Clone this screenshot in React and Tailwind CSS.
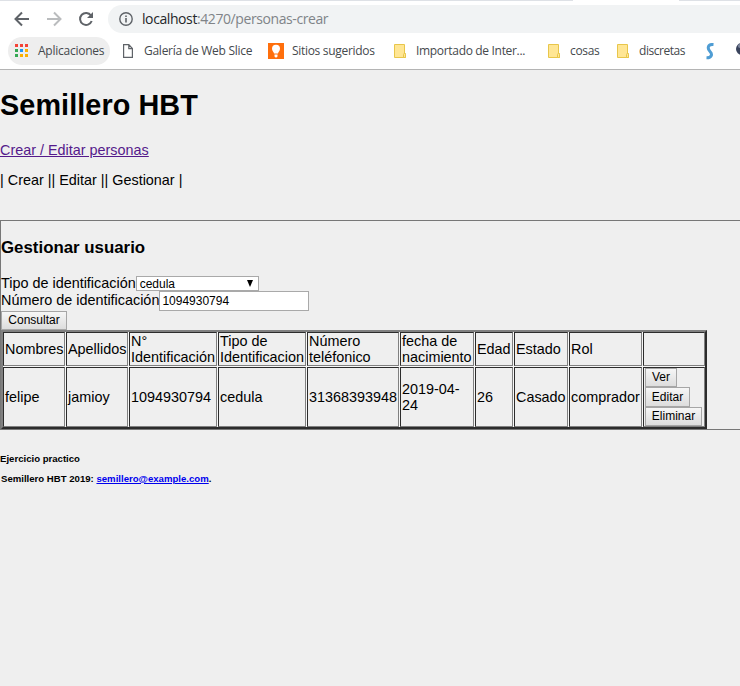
import React from 'react';

const headers = ['Nombres', 'Apellidos', 'N°\nIdentificación', 'Tipo de\nIdentificacion', 'Número\nteléfonico', 'fecha de\nnacimiento', 'Edad', 'Estado', 'Rol', ''];
const person = ['felipe', 'jamioy', '1094930794', 'cedula', '31368393948', '2019-04-\n24', '26', 'Casado', 'comprador'];

function Cell({ children }) {
  return <div className="flex flex-col justify-center border border-t-[#2c2c2c] border-r-[#808080] border-b-[#808080] border-l-[#2c2c2c] bg-[#efefef] px-px whitespace-pre">{children}</div>;
}

function Button({ children, className }) {
  return <button className={`block border border-[#a6a6a6] bg-linear-to-b from-[#f6f6f6] to-[#dddddd] text-center text-[12px] leading-[15px] ${className}`}>{children}</button>;
}

function Folder() {
  return (
    <svg width="13" height="14" viewBox="0 0 13 14" className="shrink-0">
      <path d="M.5.5h10v9h1v4H.5z" fill="#ffe694" stroke="#e8c64a" />
      <path d="M9.500 13.500v-3q0-1 1-1t1 1v3z" fill="#ffe694" stroke="#e8c64a" />
    </svg>
  );
}

function Bookmark({ icon, label, className, textClass }) {
  return (
    <div className={`flex h-7 shrink-0 items-center ${className}`}>
      {icon}
      <span className={`whitespace-nowrap ${textClass}`}>{label}</span>
    </div>
  );
}

const dots = ['#f44336', '#f44336', '#f44336', '#34a853', '#2196f3', '#fbb000', '#34a853', '#fbb000', '#fbb000'];

function Browser() {
  return (
    <header className="h-[70px] overflow-hidden border-b border-[#b4b4b4] bg-white font-['Open_Sans',sans-serif]">
      <div className="flex h-px justify-between"><div className="w-[573px] bg-[#dee1e6]" /><div className="w-[61px] bg-[#dee1e6]" /></div>
      <div className="mt-1 flex h-7 items-center">
        <svg width="108" height="28" viewBox="0 0 108 28" fill="none" strokeWidth="2" className="shrink-0">
          <path d="M29 14H16M22 7.500 15.500 14l6.500 6.500" stroke="#5f6368" />
          <path d="M47 14h13M54 7.500 60.500 14 54 20.500" stroke="#babcbe" />
          <path d="M91 10.500A6 6 0 1 0 91.700 16" stroke="#5f6368" />
          <path d="M93 7v6h-6z" fill="#5f6368" />
        </svg>
        <div className="flex h-7 flex-1 items-center rounded-l-full bg-[#f1f3f4]">
          <svg width="14" height="14" viewBox="0 0 14 14" className="ml-[11px]" fill="none" stroke="#5f6368"><circle cx="7" cy="7" r="6.200" strokeWidth="1.400" /><path d="M7 6v4.500M7 3.500v1.500" strokeWidth="1.600" /></svg>
          <span className="ml-[9px] text-[14px] leading-5 tracking-[-0.41px] text-[#808488]"><span className="text-[#24272a]">localhost</span>:4270/personas-crear</span>
        </div>
      </div>
      <div className="mt-1 flex h-7 text-[12px] text-[#45494d]">
        <Bookmark className="ml-2 w-[102px] rounded-full bg-[#eeeeee] pl-[7px]" textClass="ml-[10px] tracking-[-0.25px]" label="Aplicaciones" icon={
          <svg width="13" height="14" viewBox="0 0 13 14">{dots.map((c, i) => <rect key={i} x={(i % 3) * 5} y={Math.floor(i / 3) * 5} width="3" height="3" fill={c} />)}</svg>
        } />
        <Bookmark className="ml-[13px] w-[145px]" textClass="ml-[11px] tracking-[-0.26px]" label="Galería de Web Slice" icon={
          <svg width="10" height="14" viewBox="0 0 10 14" fill="none" stroke="#5f6368" strokeWidth="1.200"><path d="M.6.600h5.200l3.600 4v8.800H.6zM5.800.600v4h3.600" /></svg>
        } />
        <Bookmark className="w-[126px]" textClass="ml-2 tracking-[-0.31px]" label="Sitios sugeridos" icon={
          <svg width="16" height="16" viewBox="0 0 16 16"><rect width="16" height="16" fill="#ff6f0c" /><path d="M6 10.500C6 9 4 8 4 5.700a4 4 0 1 1 8 0C12 8 10 9 10 10.500zM6.500 11.500h3v2l-1 1h-1l-1-1z" fill="#fff" /></svg>
        } />
        <Bookmark className="w-[154px]" textClass="ml-[9px] tracking-[-0.32px]" label="Importado de Inter..." icon={<Folder />} />
        <Bookmark className="w-[69px]" textClass="ml-[9px] tracking-[-0.35px]" label="cosas" icon={<Folder />} />
        <Bookmark className="w-[89px]" textClass="ml-[9px] tracking-[-0.45px]" label="discretas" icon={<Folder />} />
        <svg width="8" height="17" viewBox="0 0 8 17" className="mt-[6px] shrink-0" fill="none" stroke="#4f9dd4" strokeWidth="3"><path d="M7.500 1.500C1 1 1.500 6 4 8.500S6 15 .5 14.800" /></svg>
        <svg width="4" height="14" viewBox="0 0 4 14" className="mt-[5px] ml-[22px] shrink-0"><circle cx="6" cy="7" r="6" fill="#39435c" /><circle cx="4" cy="4" r="2" fill="#818aa0" /></svg>
      </div>
    </header>
  );
}

export default function App() {
  return (
    <div className="h-[686px] w-[740px] overflow-hidden bg-[#efefef] font-['Liberation_Sans',Arial,sans-serif] text-[14.4px] leading-4 text-black">
      <Browser />
      <h1 className="mt-[19px] text-[28.8px] leading-8 font-bold tracking-[0.08px]">Semillero HBT</h1>
      <p className="mt-[21px]"><a className="text-[#551a8b] underline">Crear / Editar personas</a></p>
      <p className="mt-[14px]">| Crear || Editar || Gestionar |</p>
      <main className="mt-8 h-[210px] w-[742px] border border-[#777777]">
        <h2 className="mt-[17px] text-[16.85px] leading-[19px] font-bold">Gestionar usuario</h2>
        <div className="mt-[19px] flex h-[15px] items-start">
          <label className="-mt-px">Tipo de identificación</label>
          <div className="flex h-[15px] w-[123px] items-center justify-between border border-[#a9a9a9] bg-white pr-[4px] pl-[3px] text-[12px] leading-3">
            <span>cedula</span><svg width="8" height="8" viewBox="0 0 8 8"><path d="M1 0h6L4 7z" /></svg>
          </div>
        </div>
        <div className="flex h-5 items-start">
          <label className="mt-px">Número de identificación</label>
          <div className="h-5 w-[150px] border border-[#a9a9a9] bg-white pl-[2px] text-[12px] leading-[18px]">1094930794</div>
        </div>
        <Button className="h-[19px] w-[66px]">Consultar</Button>
        <div className="grid w-[706px] grid-cols-[62px_62px_88px_88px_92px_74px_38px_54px_73px_62px] grid-rows-[34px_60px] gap-px border-2 border-t-[#808080] border-r-[#2c2c2c] border-b-[#2c2c2c] border-l-[#808080] bg-[#f7f7f7]">
          {headers.map((text, i) => <Cell key={i}>{text}</Cell>)}
          {person.map((text, i) => <Cell key={i}>{text}</Cell>)}
          <Cell>
            <Button className="h-[19px] w-8">Ver</Button>
            <Button className="h-5 w-[45px]">Editar</Button>
            <Button className="h-[19px] w-[57px]">Eliminar</Button>
          </Cell>
        </div>
      </main>
      <footer className="text-[9.6px] leading-[11px] font-bold">
        <p className="mt-[23px]">Ejercicio practico</p>
        <p className="mt-[9px] pl-px">Semillero HBT 2019: <a className="text-[#0000ee] underline">semillero@example.com</a>.</p>
      </footer>
    </div>
  );
}
